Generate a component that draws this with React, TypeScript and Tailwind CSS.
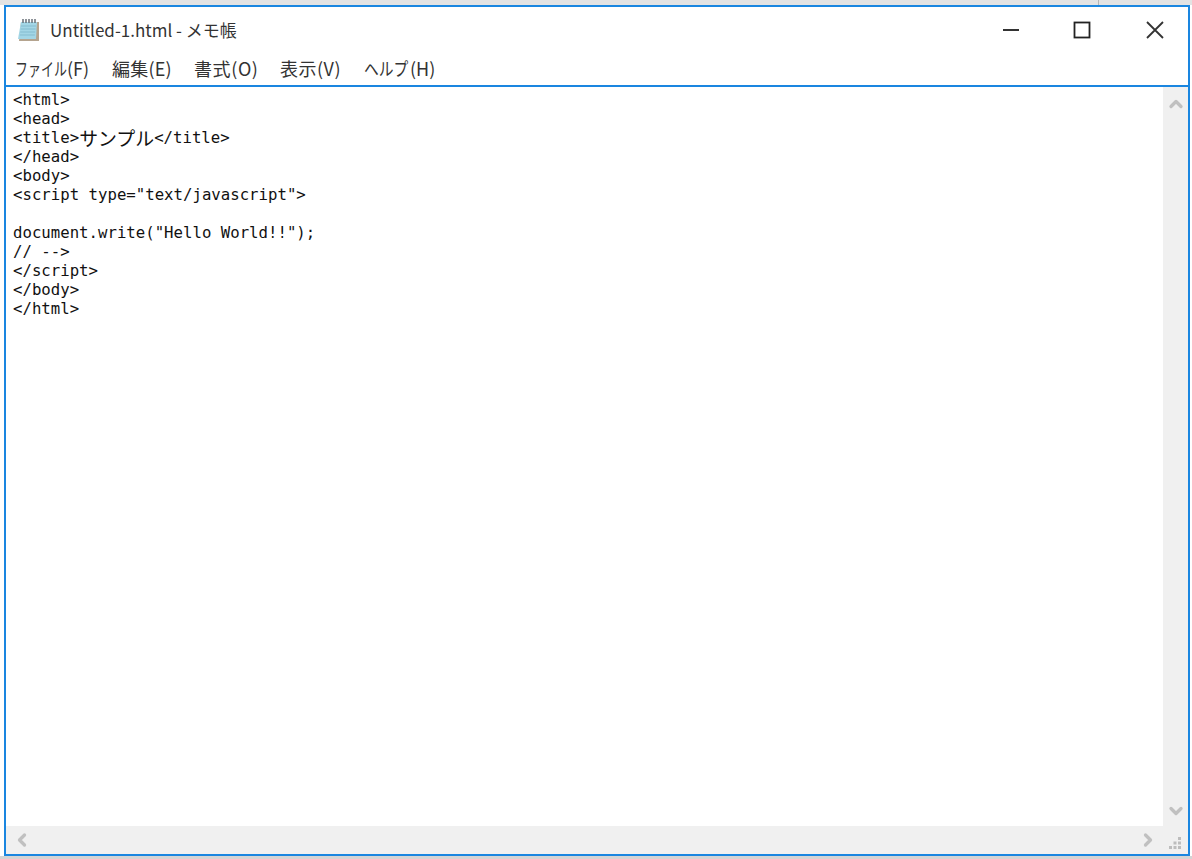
import { ChevronUp, ChevronDown, ChevronLeft, ChevronRight } from 'lucide-react'

const CODE = [
  '<html>',
  '<head>',
  '<title>',
  '</head>',
  '<body>',
  '<script type="text/javascript">',
  '',
  'document.write("Hello World!!");',
  '// -->',
  '</script>',
  '</body>',
  '</html>',
]

function NotepadIcon() {
  return (
    <svg width="26" height="26" viewBox="0 0 26 26" className="shrink-0">
      <path d="M6 5h18v19H4z" fill="#b5a48f" />
      <path d="M6 5h16l-1 17H3z" fill="#a3d6e6" />
      <path d="M6 9h15M5.600 12h15M5.200 15h15M4.800 18h15" stroke="#84bccf" strokeWidth="1" />
      <path d="M8 2v4M11 2v4M14 2v4M17 2v4M20 2v4" stroke="#6a7078" strokeWidth="1.500" />
    </svg>
  )
}

export default function App() {
  return (
    <div className="flex h-[859px] w-[1192px] flex-col overflow-hidden bg-white font-['Noto_Sans_CJK_JP',sans-serif]">
      <div className="flex h-[5px] shrink-0 justify-start bg-[#e3e3e3]">
        <div className="ml-[1098px] h-full w-[1px] bg-[#b5b5b5]" />
      </div>
      <div className="ml-[4px] flex h-[851px] w-[1186px] shrink-0 flex-col border-2 border-[#1a86e0] bg-white">
        {/* Title bar */}
        <div className="flex h-[47px] shrink-0 items-center pb-[2px] pl-[9px]">
          <NotepadIcon />
          <span className="ml-[9px] text-[17px] text-[#333]">Untitled-1.html - メモ帳</span>
          <div className="ml-auto flex items-center">
            <svg width="18" height="18" viewBox="0 0 18 18" className="mr-[53px] text-[#333]">
              <path d="M1 9h16" stroke="currentColor" strokeWidth="2" />
            </svg>
            <svg width="18" height="18" viewBox="0 0 18 18" className="mr-[54px] text-[#222]">
              <rect x="1.500" y="1.500" width="15" height="15" fill="none" stroke="currentColor" strokeWidth="1.800" />
            </svg>
            <svg width="20" height="20" viewBox="0 0 20 20" className="mr-[23px] text-[#333]">
              <path d="M2 2l16 16M18 2L2 18" stroke="currentColor" strokeWidth="1.800" />
            </svg>
          </div>
        </div>
        {/* Menu */}
        <div className="flex h-[31px] shrink-0 items-center pb-[2px] pl-[9px] text-[18px] text-[#333]">
          <span className="w-[97px] whitespace-nowrap">
            <span className="inline-block w-[52px] origin-left scale-x-[0.72]">ファイル</span>(F)
          </span>
          <span className="w-[82px] whitespace-nowrap tracking-[0.200px]">編集(E)</span>
          <span className="w-[86px] whitespace-nowrap tracking-[0.600px]">書式(O)</span>
          <span className="w-[84px] whitespace-nowrap tracking-[0.500px]">表示(V)</span>
          <span className="w-[80px] whitespace-nowrap">
            <span className="inline-block w-[46px] origin-left scale-x-[0.82]">ヘルプ</span>(H)
          </span>
        </div>
        {/* Editor */}
        <div className="flex min-h-0 flex-1 flex-col border-t-2 border-[#1a86e0]">
          <div className="flex min-h-0 flex-1">
            <pre className="min-w-0 flex-1 pl-[7px] pt-[3px] font-['DejaVu_Sans_Mono',monospace] text-[15.700px] leading-[19px] text-[#111]">
              {CODE.map((line, i) =>
                i === 2 ? (
                  <div key={i} className="flex h-[19px] items-center">
                    <span>{line}</span>
                    <span className="font-['Noto_Sans_CJK_JP',sans-serif] text-[18.900px] leading-[19px]">サンプル</span>
                    <span>{'</title>'}</span>
                  </div>
                ) : (
                  <div key={i} className="h-[19px]">{line}</div>
                ),
              )}
            </pre>
            <div className="flex w-[25px] shrink-0 flex-col items-center justify-between bg-[#f0f0f0] pb-[5px] pt-[7px] text-[#c0c0c0]">
              <ChevronUp size={20} strokeWidth={4} />
              <ChevronDown size={20} strokeWidth={4} />
            </div>
          </div>
          <div className="flex h-[28px] shrink-0 items-center bg-[#f0f0f0] text-[#c0c0c0]">
            <ChevronLeft size={20} strokeWidth={4} className="ml-[6px]" />
            <ChevronRight size={20} strokeWidth={4} className="ml-auto mr-[10px]" />
            <svg width="14" height="14" viewBox="0 0 14 14" className="mr-[6px] mt-[6px] text-[#bdbdbd]">
              <path d="M10 1h3v3h-3zM5.500 5.500h3v3h-3zM10 5.500h3v3h-3zM1 10h3v3H1zM5.500 10h3v3h-3zM10 10h3v3h-3z" fill="currentColor" />
            </svg>
          </div>
        </div>
      </div>
      <div className="flex-1 bg-[#d4d4d4]" />
    </div>
  )
}
